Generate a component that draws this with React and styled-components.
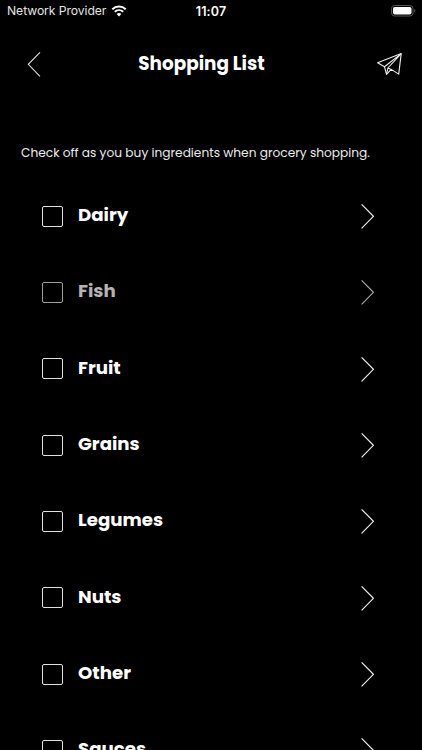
import React from "react";
import styled, { createGlobalStyle } from "styled-components";

const GlobalStyle = createGlobalStyle`
  * {
    box-sizing: border-box;
  }

  body {
    margin: 0;
    background: #000;
    overflow: hidden;
  }
`;

const Screen = styled.main`
  display: flex;
  flex-direction: column;
  width: 422px;
  height: 750px;
  overflow: hidden;
  background: #000;
  color: #fff;
  font-family: Poppins, Inter, "Liberation Sans", sans-serif;
`;

const StatusBar = styled.div`
  display: grid;
  grid-template-columns: 1fr auto 1fr;
  align-items: center;
  flex-shrink: 0;
  height: 22px;
  padding: 0 6px 0 7px;
  font-family: Inter, sans-serif;
  font-size: 12.2px;
`;

const Carrier = styled.div`
  display: flex;
  align-items: center;
  gap: 5px;
  padding-bottom: 1px;
  color: #e4e4e4;
  white-space: nowrap;
  letter-spacing: -0.08px;
`;

const Clock = styled.div`
  padding-right: 1px;
  font-size: 12.5px;
  font-weight: 600;
  letter-spacing: 0.15px;
`;

const BatteryIcon = styled.svg`
  justify-self: end;
`;

const Header = styled.header`
  display: flex;
  align-items: center;
  justify-content: space-between;
  flex-shrink: 0;
  height: 84px;
  padding: 0 19px 0 26px;
`;

const Title = styled.h1`
  margin: 0 16px 0 0;
  padding-bottom: 1px;
  font-size: 18.4px;
  line-height: 27px;
  font-weight: 700;
`;

const Hint = styled.p`
  flex-shrink: 0;
  margin: 37px 0 0;
  padding-left: 21px;
  font-size: 12.2px;
  line-height: 20px;
  color: #ececec;
  white-space: nowrap;
`;

const List = styled.ul`
  flex-shrink: 0;
  margin: 14.9px 0 0;
  padding: 0;
  list-style: none;
`;

const Row = styled.li`
  display: flex;
  align-items: center;
  height: 76.35px;
  padding: 0 48px 0 42px;
  opacity: ${({ $done }) => ($done ? 0.7 : 1)};
`;

const Checkbox = styled.span`
  width: 21px;
  height: 21px;
  border: 1px solid #e2e2e2;
  border-radius: 2px;
`;

const Label = styled.span`
  flex: 1;
  padding: 0 0 3px 15px;
  font-size: 18.2px;
  line-height: 27px;
  font-weight: 700;
`;

const categories = [
  { name: "Dairy" },
  { name: "Fish", done: true },
  { name: "Fruit" },
  { name: "Grains" },
  { name: "Legumes" },
  { name: "Nuts" },
  { name: "Other" },
  { name: "Sauces" },
];

function Wifi() {
  return (
    <svg width="16" height="12" viewBox="0 0 15 12" fill="none" stroke="#fff">
      <path d="M.8 4.2C4.6.5 10.4.5 14.2 4.2" strokeWidth="2" />
      <path d="M3.3 6.8c2.4-2.2 6-2.2 8.4 0" strokeWidth="1.9" />
      <path d="M5.1 8.9c1.4-1.2 3.4-1.2 4.8 0L7.5 11.4z" fill="#fff" stroke="none" />
    </svg>
  );
}

function Battery() {
  return (
    <BatteryIcon width="25" height="12" viewBox="0 0 25 12" fill="none">
      <rect x=".5" y=".5" width="21.5" height="10.5" rx="3" stroke="#555" />
      <rect x="2" y="2" width="18.5" height="7.5" rx="1.7" fill="#fff" />
      <path d="M23.3 4v3.6c1.4-.6 1.4-3 0-3.6z" fill="#666" />
    </BatteryIcon>
  );
}

function BackIcon() {
  return (
    <svg width="16" height="26" viewBox="0 0 16 26" fill="none" stroke="#ddd" strokeWidth="1.1">
      <path d="M14 1.3 2.3 13.3 14 25.3" />
    </svg>
  );
}

function SendIcon() {
  return (
    <svg width="26" height="24" viewBox="0 0 26 24" fill="none" stroke="#eee" strokeWidth="1.1" strokeLinejoin="round">
      <path d="M24.2 1.6.6 10.7l6.9 4.1 2 7.5 4.7-4.9 7.5 4.7z" />
      <path d="M24.2 1.6 7.5 14.8M24.2 1.6 10.9 16l-1.4 6.3M10.9 16l3.3 1.4" />
    </svg>
  );
}

function Chevron() {
  return (
    <svg width="13" height="26" viewBox="0 0 13 26" fill="none" stroke="#eee" strokeWidth="1.2">
      <path d="m.6 1.3 11.8 12L.6 25.3" />
    </svg>
  );
}

export default function App() {
  return (
    <>
      <GlobalStyle />
      <Screen>
        <StatusBar>
          <Carrier>
            Network Provider
            <Wifi />
          </Carrier>
          <Clock>11:07</Clock>
          <Battery />
        </StatusBar>

        <Header>
          <BackIcon />
          <Title>Shopping List</Title>
          <SendIcon />
        </Header>

        <Hint>Check off as you buy ingredients when grocery shopping.</Hint>

        <List>
          {categories.map((item) => (
            <Row key={item.name} $done={item.done}>
              <Checkbox />
              <Label>{item.name}</Label>
              <Chevron />
            </Row>
          ))}
        </List>
      </Screen>
    </>
  );
}
